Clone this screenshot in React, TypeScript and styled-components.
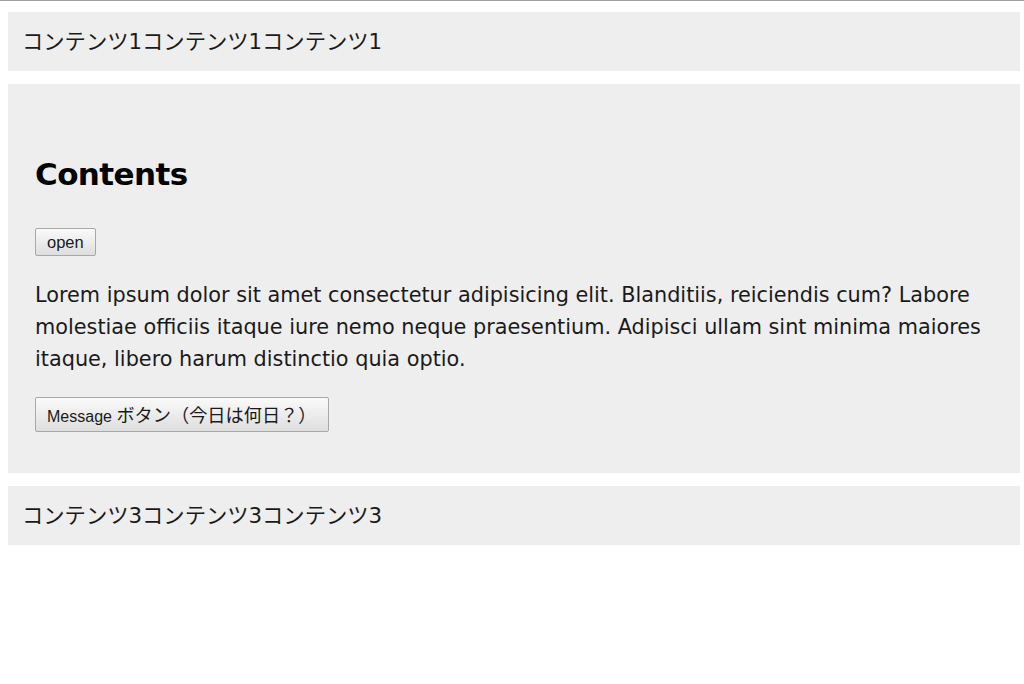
import React from "react";
import styled, { createGlobalStyle } from "styled-components";

const GlobalStyle = createGlobalStyle`
  html, body {
    margin: 0;
    padding: 0;
    background: #ffffff;
  }
  body {
    border-top: 1px solid #a0a0a0;
    font-family: "DejaVu Sans", "Noto Sans CJK JP", sans-serif;
    color: #1a1a1a;
  }
`;

const Page = styled.main`
  display: flex;
  flex-direction: column;
  gap: 13px;
  padding: 11px 4px 0 8px;
`;

const Section = styled.section`
  background: #eeeeee;
  padding: 14px;
  font-size: 21.3px;
  line-height: 31px;
`;

const Article = styled.div`
  display: flex;
  flex-direction: column;
  align-items: flex-start;
  padding: 56px 13px 27px 13px;
`;

const Title = styled.h1`
  margin: 0 0 34px;
  font-family: "DejaVu Sans", sans-serif;
  font-weight: bold;
  font-size: 31px;
  line-height: 40px;
  color: #000;
  letter-spacing: -0.6px;
`;

const Button = styled.button`
  font-family: "Liberation Sans", "Noto Sans CJK JP", sans-serif;
  font-size: 16px;
  color: #1a1a1a;
  background: linear-gradient(#fafafa, #dedede);
  border: 1px solid #a8a8a8;
  border-radius: 2px;
  padding: 0 11px;
  line-height: 1;
  cursor: pointer;
`;

const OpenButton = styled(Button)`
  height: 28px;
  padding: 0 11px;
  font-size: 16.5px;
`;

const MessageButton = styled(Button)`
  height: 35px;
  padding: 0 12px 0 11px;
`;

const Jp = styled.span`
  font-family: "Noto Sans CJK JP", sans-serif;
  font-size: 18.2px;
`;

const Text = styled.p`
  margin: 23px 0 22px;
  font-size: 20.8px;
  line-height: 32px;
  color: #1a1a1a;
`;

export default function App() {
  return (
    <>
      <GlobalStyle />
      <Page>
        <Section>コンテンツ1コンテンツ1コンテンツ1</Section>
        <Section>
          <Article>
            <Title>Contents</Title>
            <OpenButton>open</OpenButton>
            <Text>
              Lorem ipsum dolor sit amet consectetur adipisicing elit. Blanditiis,
              reiciendis cum? Labore molestiae officiis itaque iure nemo neque
              praesentium. Adipisci ullam sint minima maiores itaque, libero harum
              distinctio quia optio.
            </Text>
            <MessageButton>
              Message <Jp>ボタン（今日は何日？）</Jp>
            </MessageButton>
          </Article>
        </Section>
        <Section>コンテンツ3コンテンツ3コンテンツ3</Section>
      </Page>
    </>
  );
}
